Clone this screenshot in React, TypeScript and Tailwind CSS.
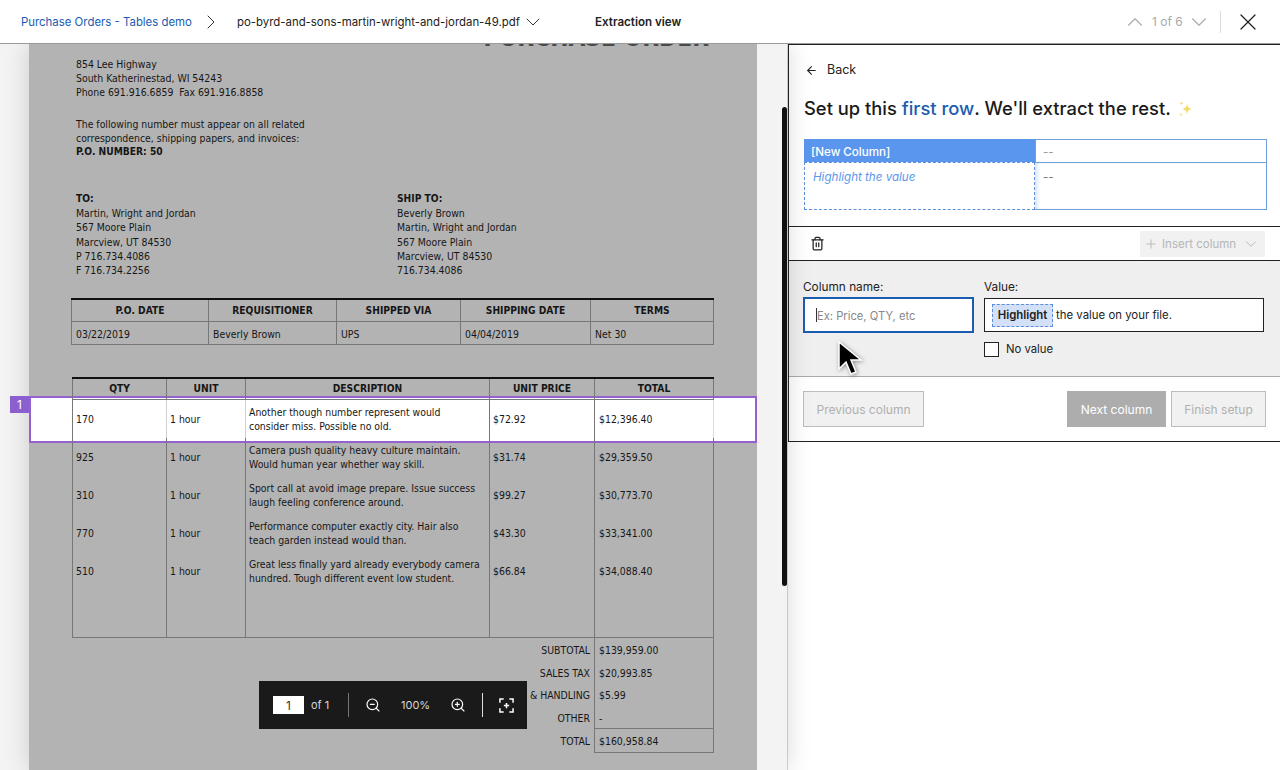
import { ArrowLeft, ChevronDown, ChevronRight, ChevronUp, Plus, Trash2, X, ZoomIn, ZoomOut } from "lucide-react";

const t1Cols = "grid grid-cols-[137px_128px_124px_130px_124px]";
const t2Cols = "grid grid-cols-[94px_79px_244px_105px_120px]";

const t1Heads = ["P.O. DATE", "REQUISITIONER", "SHIPPED VIA", "SHIPPING DATE", "TERMS"];
const t1Vals = ["03/22/2019", "Beverly Brown", "UPS", "04/04/2019", "Net 30"];
const t2Heads = ["QTY", "UNIT", "DESCRIPTION", "UNIT PRICE", "TOTAL"];

const rows = [
  ["170", "Another though number represent would", "consider miss. Possible no old.", "$72.92", "$12,396.40"],
  ["925", "Camera push quality heavy culture maintain.", "Would human year whether way skill.", "$31.74", "$29,359.50"],
  ["310", "Sport call at avoid image prepare. Issue success", "laugh feeling conference around.", "$99.27", "$30,773.70"],
  ["770", "Performance computer exactly city. Hair also", "teach garden instead would than.", "$43.30", "$33,341.00"],
  ["510", "Great less finally yard already everybody camera", "hundred. Tough different event low student.", "$66.84", "$34,088.40"],
];

const totals = [
  ["SUBTOTAL", "$139,959.00"],
  ["SALES TAX", "$20,993.85"],
  ["SHIPPING & HANDLING", "$5.99"],
  ["OTHER", "-"],
];

function Doc() {
  return (
    <div className="relative h-[726px] w-[728px] overflow-hidden bg-[#b3b3b3] text-[10.4px] leading-[14.3px] text-[#161616] [font-family:'DejaVu_Sans',sans-serif] font-stretch-condensed">
      {/* selected row sits behind the table text */}
      <div className="absolute left-0 top-[352px] h-[47px] w-[728px] border-2 border-[#9560d0] bg-white" />

      <div className="relative">
        <h1 className="mt-[-20px] h-[32.5px] pr-[48px] text-right text-[24.3px] font-bold leading-[28px] text-[#4a4a4a]">PURCHASE ORDER</h1>

        <div className="pl-[47px]">
          <p>854 Lee Highway</p>
          <p>South Katherinestad, WI 54243</p>
          <p>Phone 691.916.6859&nbsp;&nbsp;Fax 691.916.8858</p>
          <p className="mt-[17.5px]">The following number must appear on all related</p>
          <p>correspondence, shipping papers, and invoices:</p>
          <p className="text-[10.2px] font-bold">P.O. NUMBER: 50</p>

          <div className="mt-[32px] flex">
            <div className="w-[321px]">
              <p className="text-[10.2px] font-bold">TO:</p>
              <p>Martin, Wright and Jordan</p>
              <p>567 Moore Plain</p>
              <p>Marcview, UT 84530</p>
              <p>P 716.734.4086</p>
              <p>F 716.734.2256</p>
            </div>
            <div>
              <p className="text-[10.2px] font-bold">SHIP TO:</p>
              <p>Beverly Brown</p>
              <p>Martin, Wright and Jordan</p>
              <p>567 Moore Plain</p>
              <p>Marcview, UT 84530</p>
              <p>716.734.4086</p>
            </div>
          </div>
        </div>

        {/* PO summary table */}
        <div className="ml-[42px] mt-[20px] w-[643px] border-t-2 border-[#111]">
          <div className={`${t1Cols} h-[22px] border-b border-[#777]`}>
            {t1Heads.map((h, i) => (
              <div key={h} className={`flex items-center justify-center border-l border-[#777] pt-[3px] text-[10.2px] font-bold ${i === 4 ? "border-r" : ""}`}>{h}</div>
            ))}
          </div>
          <div className={`${t1Cols} h-[23px] border-b border-[#777]`}>
            {t1Vals.map((v, i) => (
              <div key={v} className={`flex items-center border-l border-[#777] pl-[4px] pt-[3px] ${i === 4 ? "border-r" : ""}`}>{v}</div>
            ))}
          </div>
        </div>

        {/* line items */}
        <div className="ml-[43px] mt-[32px] w-[642px] border-t-2 border-[#111]">
          <div className={`${t2Cols} h-[21px] border-b border-[#777]`}>
            {t2Heads.map((h, i) => (
              <div key={h} className={`flex items-center justify-center border-l border-[#777] pt-[2px] text-[10.2px] font-bold ${i === 4 ? "border-r" : ""}`}>{h}</div>
            ))}
          </div>
          {rows.map((r, n) => (
            <div key={r[0]} className={`${t2Cols} h-[38px]`}>
              <div className="flex items-center border-l border-[#777] pl-[3px] pt-[2px]">{r[0]}</div>
              <div className={`flex items-center border-l pl-[3px] pt-[2px] ${n === 0 ? "border-[#d0d0d0]" : "border-[#777]"}`}>1 hour</div>
              <div className={`flex flex-col justify-center border-l pl-[3px] pt-[1px] ${n === 0 ? "border-[#d0d0d0]" : "border-[#777]"}`}>
                <p>{r[1]}</p>
                <p>{r[2]}</p>
              </div>
              <div className="flex items-center border-l border-[#777] pl-[3px] pt-[2px]">{r[3]}</div>
              <div className={`flex items-center border-l border-r border-l-[#777] pl-[4px] pt-[2px] ${n === 0 ? "border-r-[#ddd]" : "border-r-[#777]"}`}>{r[4]}</div>
            </div>
          ))}
          <div className={`${t2Cols} h-[48px] border-b border-[#777]`}>
            <div className="border-l border-[#777]" />
            <div className="border-l border-[#777]" />
            <div className="border-l border-[#777]" />
            <div className="border-l border-[#777]" />
            <div className="border-x border-[#777]" />
          </div>

          {/* totals */}
          <div className="w-[642px]">
            {totals.map(([label, val]) => (
              <div key={label} className="flex h-[22.6px] items-center">
                <div className="w-[518px] pt-[3px] text-right">{label}</div>
                <div className="ml-[4px] flex h-full w-[120px] items-center border-x border-[#777] pl-[4px] pt-[3px]">{val}</div>
              </div>
            ))}
            <div className="flex h-[25px] items-center">
              <div className="w-[518px] pt-[2px] text-right">TOTAL</div>
              <div className="ml-[4px] flex h-full w-[120px] items-center border border-[#777] pl-[4px] pt-[2px]">$160,958.84</div>
            </div>
          </div>
        </div>
      </div>
    </div>
  );
}

function Toolbar() {
  return (
    <div className="absolute left-[259px] top-[637px] flex h-[48px] w-[268px] items-center bg-[#1a1a1a] pl-[14px] text-[11px] text-[#d8d8d8]">
      <div className="flex h-[18px] w-[31px] items-center justify-center bg-white pt-[2px] text-[12px] text-[#333]">1</div>
      <span className="ml-[7px] w-[18px] whitespace-nowrap">of 1</span>
      <div className="ml-[19px] h-[24px] w-px bg-[#777]" />
      <ZoomOut className="ml-[16px] h-[16px] w-[16px] text-white" strokeWidth={1.75} />
      <span className="ml-[20px] w-[27px] text-center">100%</span>
      <ZoomIn className="ml-[22px] h-[16px] w-[16px] text-white" strokeWidth={1.75} />
      <div className="ml-[16px] h-[24px] w-px bg-[#ddd]" />
      <svg className="ml-[16px] h-[15px] w-[15px] text-white" viewBox="0 0 16 16" fill="none" stroke="currentColor" strokeWidth="1.6">
        <path d="M1 5V1h4M11 1h4v4M15 11v4h-4M5 15H1v-4M8 5.2v5.6M5.2 8h5.6" />
      </svg>
    </div>
  );
}

function Sparkles() {
  return (
    <svg className="ml-[6px] h-[18px] w-[18px]" viewBox="0 0 18 18" fill="#f5dc6a">
      <path d="M10 3.5c.5 3.6 1.6 4.8 5 5.5-3.4.7-4.5 1.9-5 5.5-.5-3.6-1.6-4.8-5-5.5 3.4-.7 4.5-1.9 5-5.5Z" />
      <path d="M4.5 1c.2 1.5.7 2 2 2.3-1.3.3-1.8.8-2 2.3-.2-1.5-.7-2-2-2.3 1.3-.3 1.8-.8 2-2.3Z" />
      <path d="M4 12.5c.2 1.2.5 1.6 1.6 1.9-1.1.3-1.4.7-1.6 1.9-.2-1.2-.5-1.6-1.6-1.9 1.1-.3 1.4-.7 1.6-1.9Z" />
    </svg>
  );
}

function Panel() {
  return (
    <div className="w-[493px] border-l border-[#d8d8d8] bg-white">
      <div className="h-[398px] border border-r-0 border-[#222]">
        <div className="h-[181px] px-[15px]">
          <div className="flex items-center pt-[17px] text-[12.5px] leading-[16px] text-[#222]">
            <ArrowLeft className="ml-[1px] h-[13px] w-[13px]" strokeWidth={2} />
            <span className="ml-[9px]">Back</span>
          </div>
          <h2 className="mt-[19px] flex h-[24px] items-center whitespace-nowrap text-[18.35px] font-medium text-[#1a1a1a]">
            Set up this&nbsp;<span className="text-[#1a5cb0]">first row</span>. We'll extract the rest.
            <Sparkles />
          </h2>
          <div className="mt-[18px] w-[463px] text-[11.6px]">
            <div className="flex h-[23px]">
              <div className="flex w-[231px] items-center bg-[#5b96ee] pl-[7px] pt-[4px] font-medium text-white">[New Column]</div>
              <div className="flex flex-1 items-center border border-b-0 border-[#6f9fd8] pl-[7px] pt-[4px] text-[#999]">--</div>
            </div>
            <div className="flex h-[48px]">
              <div className="w-[231px] border border-dashed border-[#5b8fd8] pl-[8px] pt-[6px] italic text-[#5b96ee]">Highlight the value</div>
              <div className="flex-1 border border-l-0 border-[#6f9fd8] pl-[8px] pt-[6px] text-[#777] shadow-[inset_4px_0_4px_-2px_#cfe0f8]">--</div>
            </div>
          </div>
        </div>

        <div className="flex h-[35px] items-center justify-between border-y border-[#222] pl-[21px] pr-[15px]">
          <Trash2 className="h-[15px] w-[15px] text-[#222]" strokeWidth={2} />
          <button className="flex h-[26px] w-[125px] items-center bg-[#f1f1f1] pl-[4px] text-[11.5px] text-[#b5b5b5]">
            <Plus className="h-[14px] w-[14px]" strokeWidth={1.5} />
            <span className="ml-[4px] whitespace-nowrap pt-[2px]">Insert column</span>
            <ChevronDown className="ml-[6px] h-[18px] w-[18px]" strokeWidth={1.25} />
          </button>
        </div>

        <div className="flex h-[116px] border-b border-[#aaa] bg-[#efefef] pl-[14px] pt-[18px] text-[11.8px] text-[#222]">
          <div className="w-[181px]">
            <label className="block h-[15px] pt-[1px] leading-[15px]">Column name:</label>
            <div className="mt-[3px] flex h-[36px] w-[171px] items-center border-2 border-[#1a5cb0] bg-white pl-[11px] text-[11.2px] text-[#888]">
              <span className="h-[14px] w-px bg-[#333]" />
              <span className="pt-[2px]">Ex: Price, QTY, etc</span>
            </div>
          </div>
          <div className="w-[280px]">
            <label className="block h-[15px] pt-[1px] leading-[15px]">Value:</label>
            <div className="mt-[4px] flex h-[34px] items-center border border-[#222] bg-white pl-[7px] text-[11.4px]">
              <span className="flex h-[23px] w-[61px] items-center justify-center border border-dashed border-[#5b8fd8] bg-[#d3e0f7] pt-[2px] font-semibold text-[#222]">Highlight</span>
              <span className="ml-[3px] pt-[2px]">the value on your file.</span>
            </div>
            <div className="mt-[9px] flex items-center text-[11.3px]">
              <span className="h-[15px] w-[15px] border border-[#222] bg-white" />
              <span className="ml-[7px]">No value</span>
            </div>
          </div>
        </div>

        <div className="flex justify-between pl-[14px] pr-[14px] pt-[14px] text-[12px]">
          <button className="h-[36px] w-[121px] border border-[#bdbdbd] bg-[#f1f1f1] pt-[2px] text-[#b0b0b0]">Previous column</button>
          <div className="flex">
            <button className="h-[36px] w-[99px] bg-[#adadad] pt-[2px] text-white">Next column</button>
            <button className="ml-[5px] h-[36px] w-[95px] border border-[#bdbdbd] bg-[#f1f1f1] pt-[2px] text-[#b0b0b0]">Finish setup</button>
          </div>
        </div>
      </div>
    </div>
  );
}

export default function App() {
  return (
    <div className="relative flex h-[770px] w-[1280px] flex-col overflow-hidden bg-white [font-family:Inter,sans-serif]">
      <header className="relative z-10 flex h-[44px] shrink-0 items-center border-b border-[#9a9a9a] bg-white pl-[21px] text-[11.4px]">
        <a className="w-[171px] whitespace-nowrap pt-[2px] text-[#1a5cb0]">Purchase Orders - Tables demo</a>
        <ChevronRight className="ml-[7px] h-[24px] w-[24px] text-[#333]" strokeWidth={1} />
        <span className="ml-[14px] w-[281px] whitespace-nowrap pt-[2px] text-[#222]">po-byrd-and-sons-martin-wright-and-jordan-49.pdf</span>
        <ChevronDown className="ml-[3px] h-[24px] w-[24px] text-[#333]" strokeWidth={1} />
        <span className="ml-[50px] w-[87px] whitespace-nowrap pt-[2px] text-[11.6px] font-semibold text-[#222]">Extraction view</span>
        <ChevronUp className="ml-[440px] h-[26px] w-[26px] text-[#aaa]" strokeWidth={1} />
        <span className="ml-[4px] w-[32px] whitespace-nowrap text-[12px] text-[#aaa]">1 of 6</span>
        <ChevronDown className="ml-[2px] h-[26px] w-[26px] text-[#aaa]" strokeWidth={1} />
        <div className="ml-[8px] h-[22px] w-px bg-[#ddd]" />
        <X className="ml-[13px] h-[28px] w-[28px] text-[#222]" strokeWidth={1.1} />
      </header>

      <main className="flex min-h-0 flex-1">
        <div className="relative w-[787px] bg-[#f3f3f3] pl-[29px]">
          <div className="shadow-[0_0_24px_rgba(0,0,0,0.16)]">
            <Doc />
          </div>
          <Toolbar />
          {/* scrollbar thumb */}
          <div className="absolute left-[782px] top-[63px] h-[479px] w-[5px] rounded-full bg-[#111]" />
          {/* row number tag */}
          <div className="absolute left-[10px] top-[352px] flex h-[17px] w-[19px] items-center justify-center bg-[#8b5fd0] text-[12px] text-white">1</div>
        </div>
        <Panel />
      </main>

      {/* mouse pointer from the recording */}
      <svg className="absolute left-[836px] top-[339px] h-[40px] w-[28px] drop-shadow-[1px_1px_2px_rgba(0,0,0,0.4)]" viewBox="0 0 28 40">
        <path d="M3 3v27l7-7 5 12 5-2-5-12h10Z" fill="#000" stroke="#fff" strokeWidth="1.5" />
      </svg>
    </div>
  );
}
